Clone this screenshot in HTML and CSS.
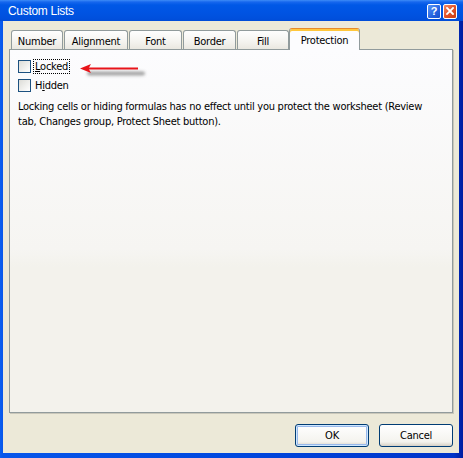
FILE: index.html
```html
<!DOCTYPE html>
<html>
<head>
<meta charset="utf-8">
<link rel="stylesheet" href="styles.css">
</head>
<body>
<div class="window">
  <div class="titlebar">
    <span class="title">Custom Lists</span>
    <div class="caption-btns">
      <span class="cbtn help">?</span>
      <span class="cbtn close">
        <svg width="8" height="8" viewBox="0 0 8 8"><path d="M1 1L7 7M7 1L1 7" stroke="#fff" stroke-width="1.8" stroke-linecap="square"/></svg>
      </span>
    </div>
  </div>
  <div class="client">
    <div class="tabs">
      <div class="tab t-number">Number</div>
      <div class="tab t-align">Alignment</div>
      <div class="tab t-font">Font</div>
      <div class="tab t-border">Border</div>
      <div class="tab t-fill">Fill</div>
      <div class="tab t-prot sel">Protection</div>
    </div>
    <div class="panel">
      <div class="check-row">
        <span class="box"></span>
        <span class="label focus"><u>L</u>ocked</span>
      </div>
      <div class="check-row">
        <span class="box"></span>
        <span class="label">H<u>i</u>dden</span>
      </div>
      <p class="desc">Locking cells or hiding formulas has no effect until you protect the worksheet (Review<br>tab, Changes group, Protect Sheet button).</p>
    </div>
    <div class="buttons">
      <button class="btn default">OK</button>
      <button class="btn">Cancel</button>
    </div>
  </div>
  <svg class="arrow" width="76" height="24" viewBox="0 0 76 24">
    <defs>
      <filter id="blur" filterUnits="userSpaceOnUse" x="0" y="0" width="76" height="24"><feGaussianBlur stdDeviation="1.5"/></filter>
    </defs>
    <path d="M13 13.5 H67" stroke="#8c8c8c" stroke-width="4" stroke-linecap="round" filter="url(#blur)" opacity="0.8"/>
    <path d="M10 8.5 H62" stroke="#e8141a" stroke-width="2"/>
    <path d="M4 8.5 L15 4 L12.5 8.5 L15 13 Z" fill="#e8141a"/>
  </svg>
</div>
</body>
</html>
```

FILE: styles.css
```css
* { box-sizing: border-box; }
html, body { margin: 0; padding: 0; }
body {
  width: 463px;
  height: 458px;
  overflow: hidden;
  font-family: "DejaVu Sans Condensed", "Liberation Sans", sans-serif;
  font-size: 11px;
  letter-spacing: -0.25px;
  color: #000;
}
.window {
  position: relative;
  width: 463px;
  height: 458px;
  display: flex;
  flex-direction: column;
  background: linear-gradient(90deg, #0a5ef0 0, #0756ea 3px, #0048df 50%, #0033c8 98%, #001d9f 100%);
}
.titlebar {
  height: 22px;
  display: flex;
  align-items: center;
  justify-content: space-between;
  padding: 0 6px 0 8px;
  background: linear-gradient(#3d8cf7 0, #1667ee 2px, #0058e6 5px, #0054e3 12px, #0050dd 18px, #004bd6 22px);
}
.title {
  color: #fff;
  font-family: "Liberation Sans", sans-serif;
  font-size: 12px;
  letter-spacing: -0.3px;
  padding-top: 1px;
}
.caption-btns {
  display: flex;
  gap: 2px;
  padding-top: 1px;
}
.cbtn {
  width: 14px;
  height: 15px;
  border: 1px solid #fff;
  border-radius: 2px;
  display: flex;
  align-items: center;
  justify-content: center;
  color: #fff;
  font-family: "Liberation Sans", sans-serif;
  font-weight: bold;
  font-size: 11px;
  letter-spacing: 0;
}
.help {
  background: linear-gradient(135deg, #5b98f8, #2663e0 60%, #1a50cc);
}
.close {
  background: linear-gradient(135deg, #f18a6a, #e2532a 50%, #c63b13);
}
.client {
  flex: 1;
  margin: 0 4px 5px 3px;
  background: #ece9d8;
  padding: 7px 6px 6px 6px;
  display: flex;
  flex-direction: column;
}
.tabs {
  display: flex;
  align-items: flex-end;
  height: 21px;
  padding-left: 2px;
  position: relative;
  z-index: 2;
}
.tab {
  height: 19px;
  margin-right: 1px;
  border: 1px solid #919b9c;
  border-bottom: none;
  border-radius: 3px 3px 0 0;
  background: linear-gradient(#fefefe, #f4f3ef 60%, #eae8e0);
  text-align: center;
  line-height: 16px;
  padding-top: 3px;
}
.t-number { width: 52px; }
.t-align { width: 64px; }
.t-font { width: 53px; }
.t-border { width: 53px; }
.t-fill { width: 52px; margin-right: 0; }
.t-prot { width: 71px; }
.tab.sel {
  height: 22px;
  margin-bottom: -1px;
  background: #fcfcfe;
  border-top: 1px solid #e68b2c;
  box-shadow: inset 0 2px 0 #ffc73c;
  padding-top: 4px;
  line-height: 16px;
}
.panel {
  position: relative;
  height: 364px;
  border: 1px solid #919b9c;
  box-shadow: 1px 1px 0 #c9c7ba;
  background: linear-gradient(#fcfcfe 0, #f6f5f2 55%, #f3f2ec 60%, #f3f2ec 100%);
  padding: 10px 8px 0 8px;
}
.check-row {
  display: flex;
  align-items: center;
  height: 13px;
  margin-bottom: 6px;
}
.box {
  width: 13px;
  height: 13px;
  border: 1px solid #1c5180;
  background: linear-gradient(135deg, #dcdcd7, #fff);
}
.label {
  margin-left: 2px;
  padding: 0 1px;
  border: 1px dotted transparent;
  line-height: 13px;
}
.label.focus {
  border-color: #000;
}
.desc {
  margin: 0;
  padding-top: 1px;
  line-height: 15px;
}
.buttons {
  margin-top: 11px;
  display: flex;
  justify-content: flex-end;
  gap: 10px;
}
.btn {
  width: 74px;
  height: 23px;
  border: 1px solid #003c74;
  border-radius: 3px;
  background: linear-gradient(#fff, #f4f3ee 80%, #d6d0c5);
  font-family: "DejaVu Sans Condensed", "Liberation Sans", sans-serif;
  font-size: 11px;
  letter-spacing: -0.25px;
  color: #000;
  padding: 0;
}
.btn.default {
  box-shadow: inset 0 0 0 1px #cee7ff, inset 0 0 0 2px #98b8ea;
}
.arrow {
  position: absolute;
  left: 76px;
  top: 60px;
}
```
